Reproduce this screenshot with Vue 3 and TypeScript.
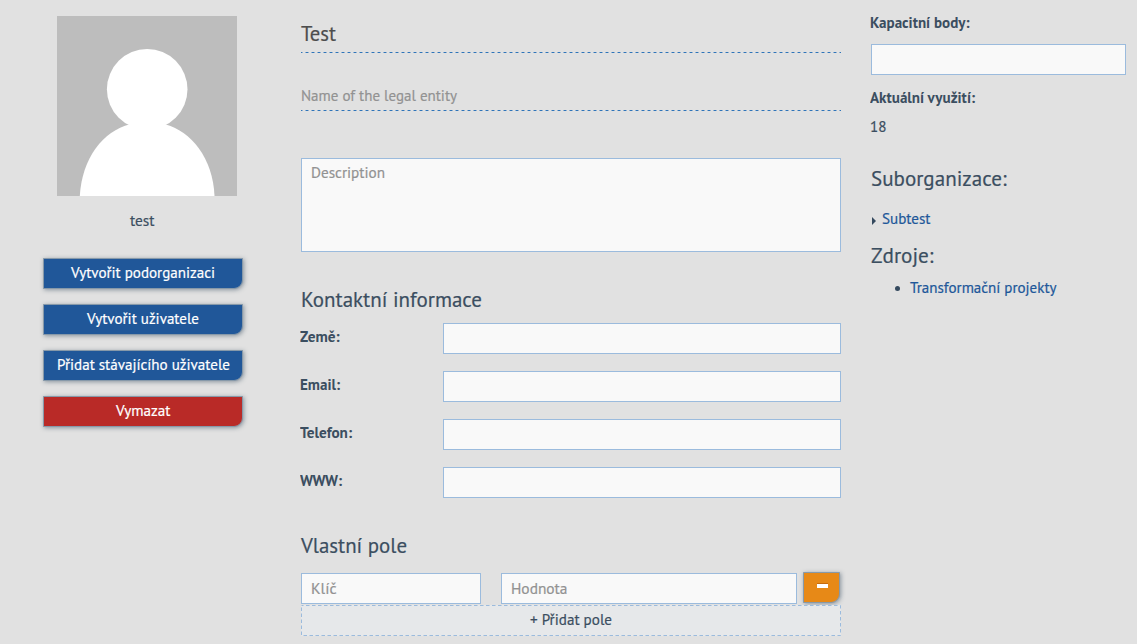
<script setup lang="ts">
import type { Directive } from 'vue'

const contacts = [
  { label: 'Země:', w: 39.5 },
  { label: 'Email:', w: 40 },
  { label: 'Telefon:', w: 52 },
  { label: 'WWW:', w: 42 },
]
const actions = [
  { label: 'Vytvořit podorganizaci', w: 144, danger: false },
  { label: 'Vytvořit uživatele', w: 112, danger: false },
  { label: 'Přidat stávajícího uživatele', w: 173, danger: false },
  { label: 'Vymazat', w: 54.5, danger: true },
]

// Condenses a label horizontally to the given width.
const vFit: Directive<HTMLElement, number> = {
  mounted(el, { value }) {
    const natural = el.getBoundingClientRect().width
    el.style.width = `${value}px`
    el.style.transform = `scaleX(${value / natural})`
  },
}
</script>

<template>
  <main class="page">
    <aside class="profile">
      <svg class="avatar" viewBox="0 0 180 180">
        <rect width="180" height="180" fill="#bdbdbd" />
        <circle cx="90.2" cy="73.3" r="40.3" fill="#fff" />
        <path d="M22.8 180C25 142 46 115 73 108.200H108C134 115 156 142 157.500 180Z" fill="#fff" />
      </svg>
      <div class="caption"><span v-fit="24.5" class="t">test</span></div>
      <div class="actions">
        <button v-for="a in actions" :key="a.label" class="btn" :class="{ danger: a.danger }">
          <span v-fit="a.w" class="t">{{ a.label }}</span>
        </button>
      </div>
    </aside>

    <section class="details">
      <div class="line title"><span v-fit="35" class="t">Test</span></div>
      <div class="line entity"><span v-fit="156" class="t">Name of the legal entity</span></div>
      <div class="field description"><span v-fit="74" class="t">Description</span></div>
      <h2 class="contact-title"><span v-fit="181" class="t">Kontaktní informace</span></h2>
      <div v-for="c in contacts" :key="c.label" class="row">
        <label><span v-fit="c.w" class="t">{{ c.label }}</span></label>
        <input class="field" type="text" />
      </div>
      <h2 class="custom-title"><span v-fit="106" class="t">Vlastní pole</span></h2>
      <div class="custom">
        <div class="field key"><span v-fit="25.5" class="t">Klíč</span></div>
        <div class="field value"><span v-fit="56.5" class="t">Hodnota</span></div>
        <button class="btn remove" aria-label="Odebrat"><i class="minus"></i></button>
      </div>
      <div class="add">
        <svg class="outline" width="540" height="31">
          <rect x="0.5" y="0.5" width="539" height="30" />
        </svg>
        <span v-fit="82" class="t">+ Přidat pole</span>
      </div>
    </section>

    <aside class="side">
      <div class="strong"><span v-fit="99.5" class="t">Kapacitní body:</span></div>
      <input class="field capacity" type="text" />
      <div class="strong usage"><span v-fit="105" class="t">Aktuální využití:</span></div>
      <div class="count"><span v-fit="16.5" class="t">18</span></div>
      <h2 class="suborg"><span v-fit="135.5" class="t">Suborganizace:</span></h2>
      <div class="tree">
        <svg width="4" height="8"><path d="M0 0L4 4L0 8Z" fill="#34495e" /></svg>
        <a><span v-fit="48.5" class="t">Subtest</span></a>
      </div>
      <h2 class="resources"><span v-fit="62.5" class="t">Zdroje:</span></h2>
      <div class="resource">
        <i class="bullet"></i>
        <a><span v-fit="146.5" class="t">Transformační projekty</span></a>
      </div>
    </aside>
  </main>
</template>

<style>
body {
  margin: 0;
  background: #e1e1e1;
  overflow: hidden;
}
</style>

<style scoped>
.page {
  display: flex;
  box-sizing: border-box;
  width: 1137px;
  height: 644px;
  overflow: hidden;
  background: #e1e1e1;
  color: #3b4e60;
  font: 15.5px/24px "PT Sans", "Noto Sans", sans-serif;
}
.t {
  display: inline-block;
  white-space: nowrap;
  transform-origin: 0 50%;
  -webkit-text-stroke: 0.2px currentColor;
}
.profile {
  width: 200px;
  margin-left: 43px;
  padding-top: 16px;
}
.avatar {
  display: block;
  width: 180px;
  height: 180px;
  margin-left: 14px;
}
.caption {
  margin: 12px 1px 0 0;
  text-align: center;
}
.actions {
  display: flex;
  flex-direction: column;
  gap: 15px;
  margin-top: 26px;
}
.btn {
  display: flex;
  align-items: center;
  justify-content: center;
  box-sizing: border-box;
  width: 200px;
  height: 31px;
  padding: 0 0 3px;
  border: 1px solid #8799a9;
  border-radius: 0 0 9px 0;
  background: #205799;
  box-shadow: 1px 1px 4px rgba(52, 73, 94, 0.5);
  color: #fff;
  font: inherit;
  font-weight: 500;
}
.danger {
  background: #b92a27;
}
.details {
  width: 540px;
  margin-left: 58px;
}
.line {
  box-sizing: border-box;
  background: repeating-linear-gradient(90deg, #2f74b8 0 1px, #8eafd0 1px 2px, transparent 2px 4px, #8eafd0 4px 5px, #2f74b8 5px 6px) 0 100% / 100% 1px no-repeat;
}
.line .t,
h2 .t {
  margin-left: -0.5px;
}
.title {
  height: 53px;
  padding-top: 22px;
  color: #4d4d4d;
  font-size: 21px;
}
.entity {
  height: 58px;
  padding-top: 30px;
  color: #929292;
}
.field {
  display: block;
  box-sizing: border-box;
  height: 31px;
  padding: 2px 9px;
  border: 1px solid #9bbbdd;
  border-radius: 0;
  background: #f9f9f9;
  color: #929292;
}
.description {
  height: 94px;
  margin-top: 47px;
  padding-top: 1px;
}
h2 {
  margin: 0;
  font-size: 21px;
  font-weight: 400;
  line-height: 30px;
}
.contact-title {
  height: 38px;
  margin-top: 33px;
}
.row {
  display: flex;
  justify-content: space-between;
  height: 31px;
  margin-bottom: 17px;
  font-weight: 700;
}
.row .t,
.strong .t {
  -webkit-text-stroke: 0;
}
.row label {
  margin: 1px 0 0 -1px;
}
.row .field {
  width: 398px;
}
.custom-title {
  margin-top: 33px;
  height: 42px;
}
.custom {
  display: flex;
  height: 32px;
}
.key {
  width: 180px;
}
.value {
  width: 296px;
  margin-left: 20px;
}
.remove {
  width: 37px;
  margin: -1px 0 0 6px;
  padding: 0 0 4px 2px;
  background: #e78917;
}
.minus {
  width: 11px;
  height: 4px;
  border-top: 1px solid #c66b0d;
  background: #fff;
}
.add {
  position: relative;
  display: flex;
  justify-content: center;
  height: 31px;
  padding: 2px 1px 0 0;
  box-sizing: border-box;
  background: #e6e8ea;
}
.outline {
  position: absolute;
  inset: 0;
  fill: none;
  stroke: #9bbbdd;
  stroke-dasharray: 3.5 2.5;
  stroke-dashoffset: 1.5;
}
.side {
  width: 255px;
  margin-left: 30px;
  padding-top: 10px;
}
.strong {
  margin-left: -1px;
  font-weight: 700;
}
.capacity {
  width: 255px;
  margin-top: 10px;
}
.usage {
  margin-top: 10px;
}
.count {
  margin: 5px 0 0 -1px;
}
.suborg {
  margin-top: 26px;
}
.tree {
  display: flex;
  align-items: center;
  gap: 6px;
  margin: 12px 0 0 1px;
}
.tree svg {
  margin-top: 5px;
}
a {
  color: #205799;
}
.resources {
  margin-top: 11px;
}
.resource {
  display: flex;
  align-items: center;
  margin: 4px 0 0 24px;
}
.bullet {
  width: 5px;
  height: 5px;
  margin: 3px 10px 0 0;
  border-radius: 50%;
  background: #34495e;
}
</style>
